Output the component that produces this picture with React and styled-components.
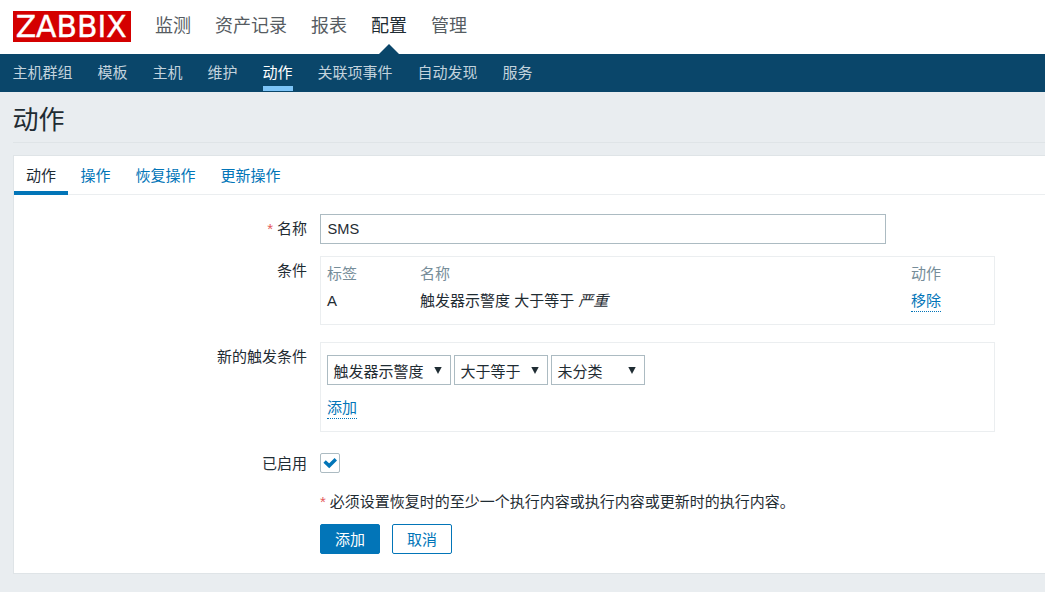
import React from 'react';
import styled, { createGlobalStyle } from 'styled-components';

const GlobalStyle = createGlobalStyle`
  * { box-sizing: border-box; }
  body {
    margin: 0;
    height: 592px;
    overflow: hidden;
    background: #e9edf0;
    color: #1f2c33;
    font-family: "Liberation Sans", "Noto Sans CJK SC", sans-serif;
    font-size: 15px;
    line-height: 20px;
  }
  a { text-decoration: none; }
`;

const Header = styled.header`
  display: flex;
  height: 54px;
  padding: 11px 13px 0;
  background: #fff;
`;

const Logo = styled.svg`
  display: block;
  width: 118px;
  height: 31px;
  overflow: visible;
  background: #d40000;
`;

const MainNav = styled.nav`
  display: flex;
  gap: 24px;
  margin-left: 24px;
`;

const MainLink = styled.a`
  position: relative;
  height: 43px;
  font-size: 18px;
  line-height: 30px;
  color: ${(p) => (p.$active ? '#1f2c33' : '#565c62')};

  &::after {
    content: '';
    display: ${(p) => (p.$active ? 'block' : 'none')};
    position: absolute;
    left: 8px;
    bottom: 0;
    border: 10px solid transparent;
    border-top: 0;
    border-bottom-color: #0a466a;
  }
`;

const SubNav = styled.nav`
  display: flex;
  gap: 25px;
  height: 38px;
  padding-left: 13px;
  background: #0a466a;
`;

const SubLink = styled.a`
  height: 37px;
  line-height: 38px;
  text-indent: -0.5px;
  white-space: nowrap;
  color: ${(p) => (p.$active ? '#fff' : '#c3d3dd')};
  width: ${(p) => p.$chars * 15}px;
  border-bottom: 5px solid ${(p) => (p.$active ? '#7dc4f7' : 'transparent')};
`;

const TitleBar = styled.div`
  height: 51px;
  margin-left: 13px;
  border-bottom: 1px solid #dfe4e7;
`;

const Title = styled.h1`
  margin: 0;
  font-size: 26px;
  font-weight: 400;
  line-height: 56px;
  text-indent: -0.5px;
`;

const Panel = styled.main`
  height: 419px;
  margin: 12px 0 0 13px;
  background: #fff;
  border: 1px solid #dfe4e7;
  border-right: 0;
`;

const Tabs = styled.div`
  display: flex;
  height: 39px;
  border-bottom: 1px solid #ebeef0;
`;

const Tab = styled.a`
  height: 39px;
  padding: 0 ${(p) => (p.$active ? '12px' : '12.5px')};
  line-height: 40px;
  color: ${(p) => (p.$active ? '#1f2c33' : '#0275b8')};
  border-bottom: 4px solid ${(p) => (p.$active ? '#0275b8' : 'transparent')};
`;

const Form = styled.form`
  padding-top: 19px;
`;

const Row = styled.div`
  display: grid;
  grid-template-columns: 293px 1fr;
  column-gap: 13px;
  align-items: start;
  margin-bottom: ${(p) => p.$gap || 0}px;
`;

const Label = styled.label`
  text-align: right;
  height: 20px;
  margin-top: ${(p) => p.$top}px;
`;

const Star = styled.span`
  margin-right: 4px;
  color: #e45959;
`;

const NameInput = styled.input`
  width: 566px;
  height: 30px;
  padding: 0 6.5px;
  font: inherit;
  font-size: 14.6px;
  color: inherit;
  border: 1px solid #acbbc2;
  outline: 0;
`;

const Box = styled.div`
  width: 675px;
  height: ${(p) => p.$height}px;
  padding: ${(p) => p.$top}px 6px 0;
  border: 1px solid #ebeef0;
`;

const Conditions = styled.div`
  display: grid;
  grid-template-columns: 93px 491px 1fr;
  grid-auto-rows: 27px;
  align-items: start;
`;

const HeadCell = styled.span`
  color: #768d99;
`;

const DottedLink = styled.a`
  display: block;
  width: 30px;
  height: 21px;
  color: #0275b8;
  border-bottom: 1px dotted #0275b8;
`;

const Selects = styled.div`
  display: flex;
  gap: 3px;
  margin-bottom: 13px;
`;

const Select = styled.div`
  display: flex;
  justify-content: space-between;
  width: ${(p) => p.$width}px;
  height: 30px;
  padding: 0 8px 0 5.5px;
  line-height: 32px;
  border: 1px solid #acbbc2;

  svg { margin-top: 11px; }
`;

const Checkbox = styled.span`
  display: flex;
  width: 20px;
  height: 20px;
  border: 1px solid #acbbc2;
  border-radius: 2px;
`;

const Note = styled.p`
  margin: 0;
`;

const Actions = styled.div`
  display: flex;
  gap: 12px;
`;

const Button = styled.button`
  width: 60px;
  height: 30px;
  padding: 2px 0 0;
  font: inherit;
  color: ${(p) => (p.$primary ? '#fff' : '#0275b8')};
  background: ${(p) => (p.$primary ? '#0275b8' : '#fff')};
  border: 1px solid #0275b8;
  border-radius: 2px;
`;

const mainItems = ['监测', '资产记录', '报表', '配置', '管理'];
const subItems = ['主机群组', '模板', '主机', '维护', '动作', '关联项事件', '自动发现', '服务'];
const tabItems = ['动作', '操作', '恢复操作', '更新操作'];
const selects = [
  { text: '触发器示警度', width: 124 },
  { text: '大于等于', width: 94 },
  { text: '未分类', width: 94 },
];

export default function App() {
  return (
    <>
      <GlobalStyle />
      <Header>
        <Logo viewBox="0 0 118 31">
          <text x="2.7" y="26.3" fill="#fff" stroke="#fff" strokeWidth="0.4" fontFamily="DejaVu Sans" fontSize="31" textLength="111" lengthAdjust="spacingAndGlyphs">ZABBIX</text>
        </Logo>
        <MainNav>
          {mainItems.map((t) => <MainLink key={t} $active={t === '配置'}>{t}</MainLink>)}
        </MainNav>
      </Header>
      <SubNav>
        {subItems.map((t) => <SubLink key={t} $chars={t.length} $active={t === '动作'}>{t}</SubLink>)}
      </SubNav>
      <TitleBar><Title>动作</Title></TitleBar>
      <Panel>
        <Tabs>
          {tabItems.map((t) => <Tab key={t} $active={t === '动作'}>{t}</Tab>)}
        </Tabs>
        <Form>
          <Row $gap={12}>
            <Label $top={5}><Star>*</Star>名称</Label>
            <NameInput defaultValue="SMS" />
          </Row>
          <Row $gap={17}>
            <Label $top={5}>条件</Label>
            <Box $height={69} $top={7}>
              <Conditions>
                <HeadCell>标签</HeadCell>
                <HeadCell>名称</HeadCell>
                <HeadCell>动作</HeadCell>
                <span>A</span>
                <span>触发器示警度 大于等于 <em>严重</em></span>
                <DottedLink>移除</DottedLink>
              </Conditions>
            </Box>
          </Row>
          <Row $gap={21}>
            <Label $top={5}>新的触发条件</Label>
            <Box $height={90} $top={12}>
              <Selects>
                {selects.map((s) => (
                  <Select key={s.text} $width={s.width}>
                    {s.text}
                    <svg width="8" height="7" viewBox="0 0 8 7"><path d="M0.3 0H7.7L4 7Z" fill="#1f2c33" /></svg>
                  </Select>
                ))}
              </Selects>
              <DottedLink>添加</DottedLink>
            </Box>
          </Row>
          <Row $gap={18}>
            <Label $top={1}>已启用</Label>
            <Checkbox>
              <svg width="18" height="18" viewBox="0 0 18 18">
                <path d="M3.6 7.4L8.2 11.8L14.8 5.2" fill="none" stroke="#0275b8" strokeWidth="3.4" />
              </svg>
            </Checkbox>
          </Row>
          <Row $gap={12}>
            <span />
            <Note><Star>*</Star>必须设置恢复时的至少一个执行内容或执行内容或更新时的执行内容。</Note>
          </Row>
          <Row>
            <span />
            <Actions>
              <Button type="button" $primary>添加</Button>
              <Button type="button">取消</Button>
            </Actions>
          </Row>
        </Form>
      </Panel>
    </>
  );
}
